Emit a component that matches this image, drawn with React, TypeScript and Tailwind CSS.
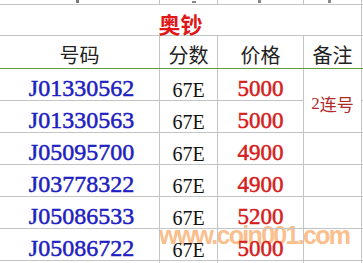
import React from "react";

const rows = [
  { code: "J01330562", price: "5000" },
  { code: "J01330563", price: "5000" },
  { code: "J05095700", price: "4900" },
  { code: "J03778322", price: "4900" },
  { code: "J05086533", price: "5200" },
  { code: "J05086722", price: "5000" },
];

const serif = { fontFamily: '"Liberation Serif", "Times New Roman", serif' };
const cjk = { fontFamily: '"Noto Sans CJK SC", "Noto Sans", sans-serif' };

export default function App() {
  return (
    <div className="relative w-[363px] h-[263px] bg-white overflow-hidden">
      {/* watermark (behind text) */}
      <div
        className="absolute left-[159px] top-[223px] text-[25px] font-bold leading-none tracking-[-1.7px] text-[#f9b070] opacity-80 pointer-events-none whitespace-nowrap"
        style={{ fontFamily: '"Liberation Sans", Arial, sans-serif' }}
      >
        www.coin001.com
      </div>
      <div className="relative">
        {/* top partial row */}
        <div className="flex h-[5px] border-b border-[#c4c4c4]">
          <div className="w-[160px] border-r border-[#c4c4c4] flex justify-center">
            <div className="w-[3px] h-[3px] ml-[-4px] bg-[#777]" />
          </div>
          <div className="w-[58px] border-r border-[#c4c4c4] flex justify-center">
            <div className="w-[4px] h-[2px] mt-[1px] ml-[10px] bg-[#888]" />
          </div>
          <div className="w-[86px] border-r border-[#c4c4c4] flex justify-center">
            <div className="w-[3px] h-[3px] ml-[-2px] bg-[#888]" />
          </div>
          <div className="w-[58px] border-r border-[#c4c4c4] flex justify-center">
            <div className="w-[3px] h-[3px] ml-[-6px] bg-[#888]" />
          </div>
        </div>
        {/* title row */}
        <div className="flex h-[31px] border-b border-[#c4c4c4]">
          <div
            className="w-[362px] border-r border-[#c4c4c4] flex items-center justify-center pt-[5px] text-[22px] font-bold leading-none text-[#e01818]"
            style={cjk}
          >
            奥钞
          </div>
        </div>
        {/* header row */}
        <div className="flex h-[33px] border-b border-[#6a9a48] text-[20px] leading-none text-[#222]" style={cjk}>
          <div className="w-[160px] border-r border-[#c4c4c4] flex items-center justify-center pt-[6px]">号码</div>
          <div className="w-[58px] border-r border-[#c4c4c4] flex items-center justify-center pt-[6px]">分数</div>
          <div className="w-[86px] border-r border-[#c4c4c4] flex items-center justify-center pt-[6px]">价格</div>
          <div className="w-[58px] border-r border-[#c4c4c4] flex items-center justify-center pt-[6px]">备注</div>
        </div>
        {/* data rows */}
        <div className="grid grid-cols-[160px_58px_86px_58px_1px] grid-rows-[repeat(6,32px)]">
          {rows.map((r, i) => (
            <React.Fragment key={r.code}>
              <div
                className="border-b border-r border-[#c4c4c4] flex items-end justify-center text-[24px] leading-none text-[#2020c0] [-webkit-text-stroke:0.5px_#2020c0] pl-[4px]"
                style={serif}
              >
                {r.code}
              </div>
              <div
                className="border-b border-r border-[#c4c4c4] flex items-end justify-center text-[20px] leading-none text-[#111]"
                style={serif}
              >
                67E
              </div>
              <div
                className="border-b border-r border-[#c4c4c4] flex items-end justify-center text-[23px] leading-none text-[#d42020] [-webkit-text-stroke:0.5px_#d42020]"
                style={serif}
              >
                {r.price}
              </div>
              {i === 0 ? (
                <div
                  className="row-span-2 border-b border-r border-[#c4c4c4] flex items-center justify-center pt-[6px] text-[17px] leading-none text-[#b02a2a]"
                  style={{ fontFamily: '"Liberation Serif", "Noto Sans CJK SC", serif' }}
                >
                  2<span style={cjk}>连号</span>
                </div>
              ) : i === 1 ? null : (
                <div className="border-b border-r border-[#c4c4c4]" />
              )}
              <div className="border-b border-[#c4c4c4]" />
            </React.Fragment>
          ))}
        </div>
        {/* bottom partial */}
        <div className="flex h-[2px]">
          <div className="w-[160px] border-r border-[#c4c4c4]" />
          <div className="w-[58px] border-r border-[#c4c4c4]" />
          <div className="w-[86px] border-r border-[#c4c4c4]" />
          <div className="w-[58px] border-r border-[#c4c4c4]" />
        </div>
      </div>
    </div>
  );
}
